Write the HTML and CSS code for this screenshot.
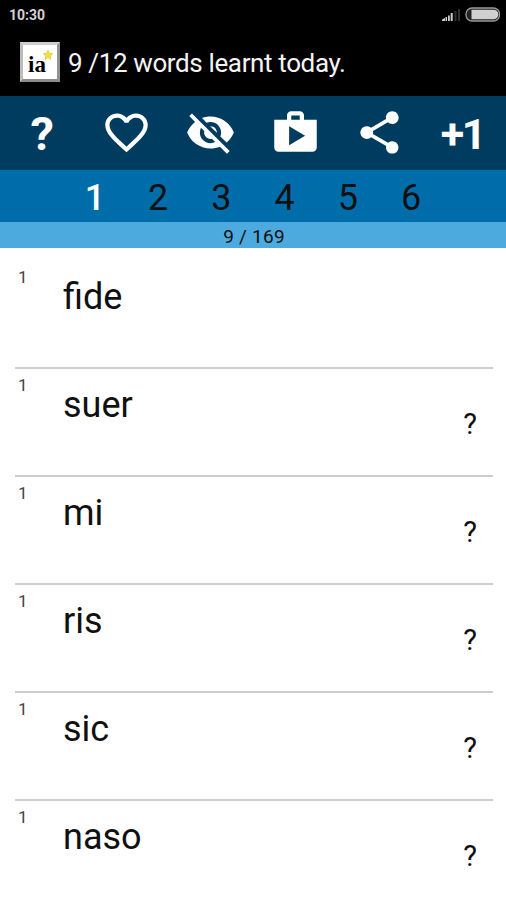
FILE: index.html
```html
<!DOCTYPE html>
<html lang="en">
<head>
<meta charset="utf-8">
<title>Words</title>
<link rel="stylesheet" href="styles.css">
</head>
<body>
<div class="status">
  <span class="time">10:30</span>
  <svg class="indicators" width="60" height="18" viewBox="0 0 60 18">
    <path d="M2 15v-1.500L5 12v3zM5.500 15v-4H7v4zM8 9.500h1.800V15H8zM10.700 7h2v8h-2z" fill="#ccc"/>
    <path d="M14.500 5h2v10h-2zM18 3h2v12h-2z" fill="#303030"/>
    <rect x="26" y="2" width="33.500" height="13" rx="6" fill="#222" stroke="#999" stroke-width="1.300"/>
    <path d="M31.500 3.700h22a4.700 4.700 0 0 1 0 9.600h-22z" fill="#d0d0d0"/>
  </svg>
</div>
<header class="title">
  <div class="logo"><span>ia</span>
    <svg class="star" width="10" height="10" viewBox="0 0 10 10"><path d="M5 .3 6.300 3.500 9.800 3.700 7.200 6 8 9.500 5 7.600 2 9.500 2.800 6 .2 3.700 3.700 3.500z" fill="#f5e620" stroke="#bdb040" stroke-width=".5"/></svg>
  </div>
  <h1>9 /12 words learnt today.</h1>
</header>
<nav class="toolbar">
  <span class="help">?</span>
  <svg viewBox="0 0 24 24"><path d="M16.500 3c-1.740 0-3.410.81-4.500 2.090C10.910 3.810 9.240 3 7.500 3 4.420 3 2 5.420 2 8.500c0 3.780 3.400 6.860 8.550 11.540L12 21.350l1.450-1.320C18.600 15.360 22 12.280 22 8.500 22 5.420 19.580 3 16.500 3zm-4.400 15.550l-.1.100-.1-.1C7.140 14.240 4 11.390 4 8.500 4 6.500 5.500 5 7.500 5c1.540 0 3.040.99 3.570 2.360h1.870C13.460 5.990 14.960 5 16.500 5c2 0 3.500 1.500 3.500 3.500 0 2.890-3.140 5.740-7.900 10.050z"/></svg>
  <svg viewBox="0 0 24 24"><path d="M12 7c2.760 0 5 2.240 5 5 0 .65-.13 1.260-.36 1.830l2.920 2.920c1.510-1.260 2.700-2.890 3.430-4.750-1.730-4.390-6-7.500-11-7.500-1.400 0-2.740.25-3.980.7l2.160 2.160C10.740 7.130 11.350 7 12 7zM2 4.270l2.280 2.280.46.46C3.080 8.300 1.780 10.020 1 12c1.730 4.390 6 7.500 11 7.500 1.550 0 3.030-.3 4.380-.84l.42.42L19.730 22 21 20.730 3.270 3 2 4.270zM7.530 9.800l1.550 1.550c-.05.21-.08.43-.08.650 0 1.660 1.340 3 3 3 .22 0 .44-.03.65-.08l1.550 1.550c-.67.33-1.410.53-2.200.53-2.760 0-5-2.240-5-5 0-.79.2-1.530.53-2.200zm4.310-.78l3.150 3.150.02-.16c0-1.660-1.340-3-3-3l-.17.010z"/></svg>
  <svg viewBox="0 0 24 24"><path d="M16 6V4c0-1.110-.89-2-2-2h-4c-1.110 0-2 .89-2 2v2H2v13c0 1.110.89 2 2 2h16c1.110 0 2-.89 2-2V6h-6zm-6-2h4v2h-4V4zM9 18V9l7.500 4.500L9 18z"/></svg>
  <svg viewBox="0 0 24 24"><path d="M18 16.080c-.76 0-1.440.3-1.960.77L8.910 12.700c.05-.23.09-.46.09-.7s-.04-.47-.09-.7l7.050-4.110c.54.5 1.250.81 2.040.81 1.660 0 3-1.340 3-3s-1.340-3-3-3-3 1.340-3 3c0 .24.04.47.09.7L8.040 9.810C7.500 9.310 6.790 9 6 9c-1.660 0-3 1.340-3 3s1.340 3 3 3c.79 0 1.500-.31 2.040-.81l7.120 4.160c-.05.21-.08.43-.08.650 0 1.610 1.310 2.920 2.920 2.920 1.610 0 2.920-1.310 2.920-2.920s-1.310-2.920-2.920-2.920z"/></svg>
  <span class="plus">+1</span>
</nav>
<nav class="levels">
  <span class="active">1</span><span>2</span><span>3</span><span>4</span><span>5</span><span>6</span>
</nav>
<div class="progress">9 / 169</div>
<main class="words">
  <section class="row"><span class="level">1</span><span class="word">fide</span></section>
  <section class="row"><span class="level">1</span><span class="word">suer</span><span class="ask">?</span></section>
  <section class="row"><span class="level">1</span><span class="word">mi</span><span class="ask">?</span></section>
  <section class="row"><span class="level">1</span><span class="word">ris</span><span class="ask">?</span></section>
  <section class="row"><span class="level">1</span><span class="word">sic</span><span class="ask">?</span></section>
  <section class="row"><span class="level">1</span><span class="word">naso</span><span class="ask">?</span></section>
</main>
</body>
</html>
```
FILE: styles.css
```css
* { box-sizing: border-box; }
body {
  margin: 0;
  height: 900px;
  overflow: hidden;
  background: #fff;
  color: #101010;
  font-family: Roboto, sans-serif;
}
.status {
  height: 32px;
  padding: 6px 6px 0 9px;
  display: flex;
  justify-content: space-between;
  background: #000;
  color: #d2d2d2;
}
.time { font-size: 14px; font-weight: 700; line-height: 18px; }
.indicators { display: block; }
.title {
  height: 64px;
  padding: 10px 0 0 20px;
  display: flex;
  gap: 8px;
  background: #000;
  color: #f4f4f4;
}
.title h1 {
  margin: 0;
  font-size: 26px;
  font-weight: 400;
  line-height: 42px;
  letter-spacing: -0.37px;
  white-space: nowrap;
}
.logo {
  position: relative;
  width: 40px;
  height: 40px;
  border: 3px solid;
  border-color: #cfcfcf #929292 #8c8c8c #bdbdbd;
  background: #fff;
  color: #000;
  font: 700 23px/40px "Liberation Serif", serif;
  padding-left: 5px;
}
.star { position: absolute; right: 4px; top: 5px; }
.toolbar {
  height: 73.5px;
  display: grid;
  grid-template-columns: repeat(6, 1fr);
  place-items: center;
  background: #003c5f;
  color: #fff;
  font-weight: 700;
}
.toolbar svg { width: 51px; height: 51px; fill: #fff; }
.help { font-size: 47px; line-height: 50px; padding-top: 2px; }
.plus { font-size: 43px; line-height: 50px; padding: 2px 3px 0 0; letter-spacing: -2.5px; }
.levels {
  height: 52.5px;
  padding: 0 63.25px;
  display: grid;
  grid-template-columns: repeat(6, 1fr);
  text-align: center;
  background: #006dab;
  font-size: 36px;
  line-height: 56px;
}
.levels .active { color: #fff; font-weight: 500; }
.progress {
  height: 26px;
  background: #4daadf;
  text-align: center;
  font-size: 19px;
  line-height: 30px;
  padding-left: 2px;
  letter-spacing: 0.25px;
}
.words { padding: 13.4px 13px 0 15px; }
.row {
  height: 107.850px;
  display: flex;
  align-items: flex-start;
  border-bottom: 2px solid #ccc;
}
.level { width: 48px; padding: 6px 0 0 3px; font-size: 17px; line-height: 20px; color: #444; }
.word { flex: 1; padding-top: 14px; font-size: 36px; line-height: 44px; }
.ask { width: 46px; text-align: center; padding-top: 36px; font-size: 29px; line-height: 38px; }
```
